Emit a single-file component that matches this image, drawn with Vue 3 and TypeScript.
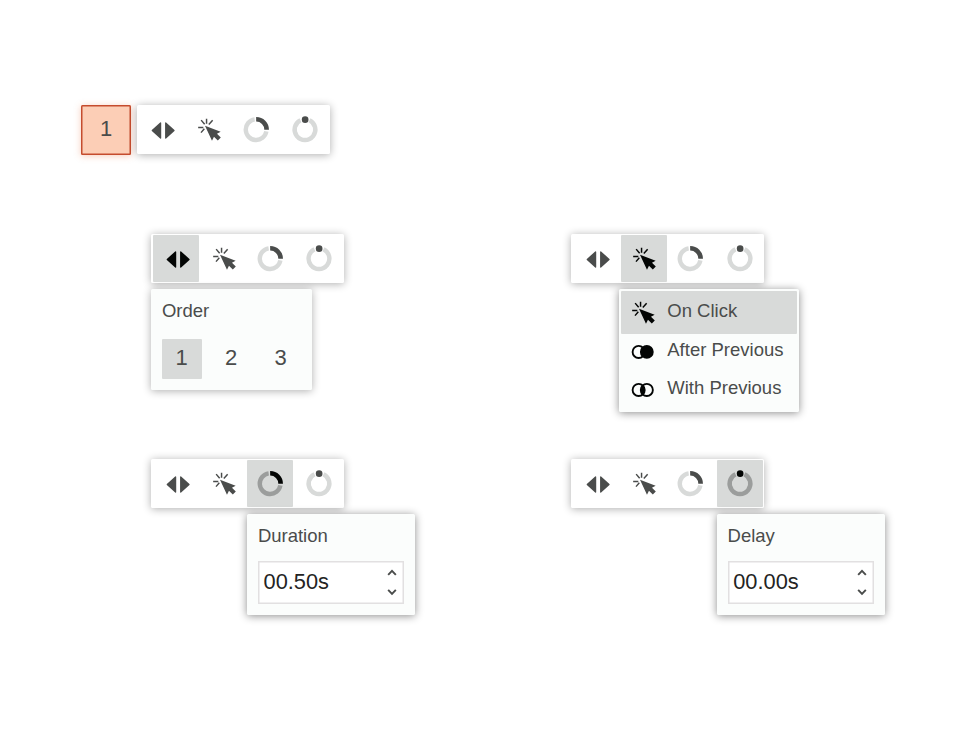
<script setup lang="ts">
import { defineComponent, h, ref } from 'vue'

type IconName = 'order' | 'click' | 'duration' | 'delay' | 'after' | 'with'

const tools: IconName[] = ['order', 'click', 'duration', 'delay']

const ActionIcon = defineComponent({
  props: { name: { type: String, required: true } },
  setup(props) {
    const shapes = () => {
      switch (props.name as IconName) {
        case 'order':
          return [
            h('path', {
              class: 'solid',
              d: 'M41.500 72.200 66.500 49.300q2.500-1.500 3.200.7V97q-.7 2.200-3.200.7L41.500 75q-1.300-1.400 0-2.800ZM109.500 72.200 84.500 49.300q-2.500-1.500-3.200.7V97q.7 2.200 3.200.7L109.500 75q1.300-1.400 0-2.800Z',
            }),
          ]
        case 'click':
          return [
            h('path', { class: 'ray', d: 'M61.700 38.500V53.500M45.500 42.500l10.500 12.500M80 42.500l-11.500 13M36.500 64.500H52M45 80l10-11.500' }),
            h('path', { class: 'solid', d: 'M57 59.500 104 77.500 93 83.500 104.500 95 95.500 104 84 92.500 78 104.500Z' }),
          ]
        case 'duration':
          return [
            h('path', { class: 'track', d: 'M100.200 76.500A31.200 31.200 0 1 1 65 40.100' }),
            h('path', { class: 'arc', d: 'M69.500 39.800A31.200 31.200 0 0 1 101 71.500' }),
          ]
        case 'delay':
          return [
            h('path', { class: 'track', d: 'M82.500 42.900A31.200 31.200 0 1 1 55.500 42.900' }),
            h('circle', { class: 'solid', cx: 69.5, cy: 41, r: 10 }),
          ]
        case 'after':
          return [
            h('circle', { class: 'outline', cx: 53, cy: 54, r: 18.2 }),
            h('circle', { class: 'solid', cx: 77.5, cy: 54, r: 20.7 }),
          ]
        case 'with':
          return [
            h('path', { class: 'solid', d: 'M65.250 40A18.500 18.500 0 0 1 65.250 68A18.500 18.500 0 0 1 65.250 40Z' }),
            h('circle', { class: 'outline', cx: 53, cy: 54, r: 18.2 }),
            h('circle', { class: 'outline', cx: 77.5, cy: 54, r: 18.2 }),
          ]
      }
    }
    return () => h('svg', { viewBox: '0 0 139 140', 'aria-hidden': 'true' }, shapes())
  },
})

interface Group {
  active: IconName
  title?: string
  time?: string
}

const groups: Group[] = [
  { active: 'order', title: 'Order' },
  { active: 'click' },
  { active: 'duration', title: 'Duration', time: '00.50s' },
  { active: 'delay', title: 'Delay', time: '00.00s' },
]

const triggers: { icon: IconName; label: string }[] = [
  { icon: 'click', label: 'On Click' },
  { icon: 'after', label: 'After Previous' },
  { icon: 'with', label: 'With Previous' },
]

const position = ref(1)
const trigger = ref<IconName>('click')
</script>

<template>
  <main class="page">
    <header class="summary">
      <div class="badge">1</div>
      <div class="toolbar">
        <button v-for="tool in tools" :key="tool" :class="['tool', tool]" :aria-label="tool">
          <ActionIcon :name="tool" />
        </button>
      </div>
    </header>

    <section class="groups">
      <article v-for="group in groups" :key="group.active" class="group">
        <div class="toolbar">
          <button
            v-for="tool in tools"
            :key="tool"
            :class="['tool', tool, { active: tool === group.active }]"
            :aria-label="tool"
          >
            <ActionIcon :name="tool" />
          </button>
        </div>

        <div v-if="group.active === 'order'" class="panel order-panel">
          <div class="title">{{ group.title }}</div>
          <div class="numbers">
            <button
              v-for="n in 3"
              :key="n"
              :class="['number', { chosen: n === position }]"
              @click="position = n"
            >{{ n }}</button>
          </div>
        </div>

        <ul v-else-if="group.active === 'click'" class="panel menu">
          <li
            v-for="item in triggers"
            :key="item.icon"
            :class="['item', { chosen: item.icon === trigger }]"
            @click="trigger = item.icon"
          >
            <ActionIcon :name="item.icon" />
            <span>{{ item.label }}</span>
          </li>
        </ul>

        <div v-else :class="['panel', 'time-panel', group.active + '-panel']">
          <div class="title">{{ group.title }}</div>
          <div class="field">
            <span class="value">{{ group.time }}</span>
            <svg class="stepper" viewBox="0 0 36 84" aria-hidden="true">
              <path d="M6.500 20.500 18 8.500 29.500 20.500M6.500 65.500 18 77.500 29.500 65.500" />
            </svg>
          </div>
        </div>
      </article>
    </section>
  </main>
</template>

<style>
body {
  background: #fff;
}
</style>

<style scoped>
.page {
  box-sizing: border-box;
  width: 980px;
  height: 736px;
  padding-top: 105px;
  overflow: hidden;
  background: #fff;
  color: #4a4c4b;
  font-family: "Liberation Sans", Arial, sans-serif;
  font-size: 18.5px;
  line-height: 22px;
}
button {
  padding: 0;
  border: 0;
  background: none;
  color: inherit;
  font: inherit;
  display: block;
}
.summary {
  display: flex;
  gap: 6px;
  height: 129px;
  padding-left: 81.300px;
}
.badge {
  box-sizing: border-box;
  width: 49.700px;
  height: 49.500px;
  border-radius: 1.500px;
  background: #fcceb6;
  box-shadow: inset 0 0 0 1.500px #c54c2e, 0 1px 7px rgba(230, 110, 60, 0.35);
  font-size: 22px;
  line-height: 48px;
  text-align: center;
}
.toolbar {
  box-sizing: border-box;
  display: flex;
  width: 193px;
  height: 49.300px;
  padding: 1.400px;
  border-radius: 1.500px;
  background: #fff;
  box-shadow: 0 1px 8px rgba(0, 0, 0, 0.32);
}
.tool {
  flex: none;
  width: 46.300px;
  height: 46.500px;
  border-radius: 1px;
}
.tool.click {
  margin-left: 1.700px;
}
.tool.delay {
  margin-left: 3.200px;
}
.tool.active {
  background: #d8dad9;
}
.tool :deep(svg) {
  display: block;
  width: 46.300px;
  height: 46.600px;
}
.page :deep(.solid) {
  fill: #4a4c4b;
}
.page :deep(.ray) {
  fill: none;
  stroke: #4a4c4b;
  stroke-width: 4.400;
}
.page :deep(.track) {
  fill: none;
  stroke: #d8dad9;
  stroke-width: 13.300;
}
.page :deep(.arc) {
  fill: none;
  stroke: #4a4c4b;
  stroke-width: 14;
}
.page :deep(.outline) {
  fill: none;
  stroke: #030504;
  stroke-width: 5.600;
}
.page .active :deep(.solid),
.page .menu :deep(.solid) {
  fill: #030504;
}
.page .active :deep(.ray),
.page .active :deep(.arc),
.page .menu :deep(.ray) {
  stroke: #030504;
}
.page .active :deep(.track) {
  stroke: #9b9d9c;
}
.groups {
  display: grid;
  grid-template-columns: 420.200px 380px;
  grid-template-rows: 224.800px 200px;
  padding-left: 151.300px;
}
.group {
  display: flex;
  flex-direction: column;
  align-items: flex-start;
  gap: 6px;
}
.panel {
  box-sizing: border-box;
  border-radius: 1.500px;
  background: #fbfdfc;
  box-shadow: 0 1px 8px rgba(0, 0, 0, 0.45);
}
.title {
  height: 22px;
}
.order-panel {
  width: 160.700px;
  height: 100.500px;
  padding: 11px 10.700px;
  box-shadow: 0 1px 8px rgba(0, 0, 0, 0.32);
}
.numbers {
  display: flex;
  gap: 9.200px;
  margin-top: 16.500px;
}
.number {
  flex: none;
  width: 40.300px;
  height: 40px;
  border-radius: 1px;
  font-size: 22px;
  line-height: 37px;
  padding: 0 1px 2px 0;
}
.number.chosen {
  background: #d8dad9;
}
.menu {
  width: 179.300px;
  height: 123px;
  margin: 0 0 0 48px;
  padding: 1.500px;
  list-style: none;
}
.item {
  display: flex;
  height: 38.500px;
  white-space: nowrap;
}
.item span {
  padding-top: 5.500px;
}
.item :deep(svg) {
  flex: none;
  width: 46.300px;
  height: 46.600px;
}
.item.chosen {
  height: 42.800px;
  border-radius: 1px;
  background: #d8dad9;
}
.item.chosen :deep(svg) {
  margin: -2px 1px 0 -1px;
}
.item.chosen span {
  padding-top: 9.700px;
}
.item:last-child span {
  padding-top: 5px;
}
.time-panel {
  width: 168.500px;
  height: 100.500px;
  padding: 11.200px 10.900px;
}
.duration-panel {
  margin-left: 95.700px;
}
.delay-panel {
  margin-left: 145.200px;
}
.field {
  box-sizing: border-box;
  display: flex;
  align-items: center;
  justify-content: space-between;
  width: 146.500px;
  height: 43px;
  margin-top: 13.500px;
  padding: 0 6.500px 0 5.700px;
  box-shadow: inset 0 0 0 1.500px #e2e0e1;
  background: #fff;
}
.value {
  color: #232323;
  font-size: 21.800px;
  padding-bottom: 1px;
}
.stepper {
  width: 12px;
  height: 28px;
  fill: none;
  stroke: #4a4c4b;
  stroke-width: 5.800;
}
</style>
